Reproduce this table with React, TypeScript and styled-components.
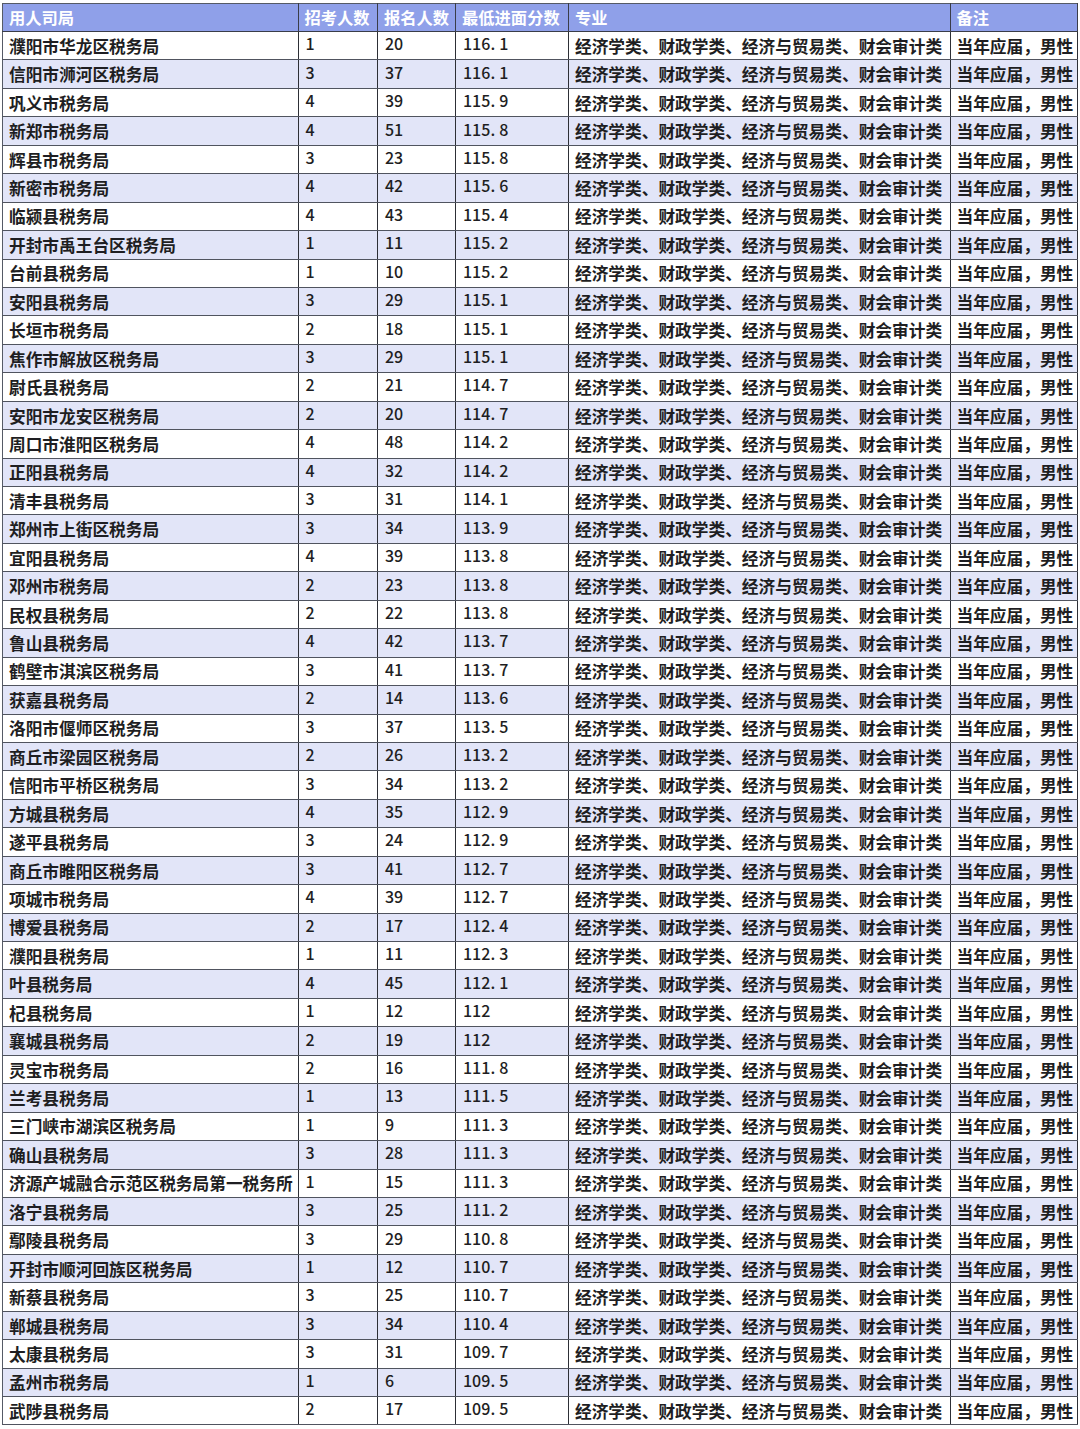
import React from "react";
import styled, { createGlobalStyle } from "styled-components";

const GlobalStyle = createGlobalStyle`
  html, body { margin: 0; padding: 0; background: #ffffff; }
  body { font-family: "Noto Sans CJK SC", "Noto Sans", sans-serif; }
`;

const Page = styled.div`
  width: 1080px;
  height: 1429px;
  padding: 3px 3px 0 2px;
  box-sizing: border-box;
  background: #ffffff;
`;

const Table = styled.table`
  width: 1075px;
  border-collapse: collapse;
  table-layout: fixed;
  border: 1.5px solid #555a66;
`;

const HeadCell = styled.th`
  height: 28px;
  padding: 0 0 0 6px;
  background: #8fa0e9;
  color: #ffffff;
  font-family: "Noto Sans CJK SC", sans-serif;
  font-weight: 700;
  font-size: 16.3px;
  text-align: left;
  white-space: nowrap;
  overflow: hidden;
  border-right: 1.5px solid #3a3d48;
  border-bottom: 1.5px solid #3a3d48;
  box-sizing: border-box;
  line-height: 1;
`;

const Row = styled.tr<{ $striped: boolean }>`
  height: 28.44px;
  background: ${(p) => (p.$striped ? "#e2e5f8" : "#ffffff")};
`;

const Cell = styled.td<{ $num?: boolean }>`
  padding: 0 0 0 ${(p) => (p.$num ? 7 : 6)}px;
  color: #1e1e22;
  font-family: "Noto Sans CJK SC", sans-serif;
  font-weight: ${(p) => (p.$num ? 500 : 700)};
  font-size: ${(p) => (p.$num ? "16px" : "16.7px")};
  line-height: 1;
  white-space: nowrap;
  overflow: hidden;
  vertical-align: middle;
  border-right: 1.5px solid #2d2f36;
  border-bottom: 1.5px solid #50545f;
  box-sizing: border-box;
  ${(p) => (p.$num ? "padding-bottom: 5px;" : "padding-top: 1px;")}
`;

const Dot = styled.span`
  display: inline-block;
  width: 0.55em;
`;

const columns = ["用人司局", "招考人数", "报名人数", "最低进面分数", "专业", "备注"];
const widths = [295.5, 79.5, 78, 113, 381.5, 127.5];

const data: [string, number, number, string][] = [
  ["濮阳市华龙区税务局", 1, 20, "116.1"],
  ["信阳市浉河区税务局", 3, 37, "116.1"],
  ["巩义市税务局", 4, 39, "115.9"],
  ["新郑市税务局", 4, 51, "115.8"],
  ["辉县市税务局", 3, 23, "115.8"],
  ["新密市税务局", 4, 42, "115.6"],
  ["临颍县税务局", 4, 43, "115.4"],
  ["开封市禹王台区税务局", 1, 11, "115.2"],
  ["台前县税务局", 1, 10, "115.2"],
  ["安阳县税务局", 3, 29, "115.1"],
  ["长垣市税务局", 2, 18, "115.1"],
  ["焦作市解放区税务局", 3, 29, "115.1"],
  ["尉氏县税务局", 2, 21, "114.7"],
  ["安阳市龙安区税务局", 2, 20, "114.7"],
  ["周口市淮阳区税务局", 4, 48, "114.2"],
  ["正阳县税务局", 4, 32, "114.2"],
  ["清丰县税务局", 3, 31, "114.1"],
  ["郑州市上街区税务局", 3, 34, "113.9"],
  ["宜阳县税务局", 4, 39, "113.8"],
  ["邓州市税务局", 2, 23, "113.8"],
  ["民权县税务局", 2, 22, "113.8"],
  ["鲁山县税务局", 4, 42, "113.7"],
  ["鹤壁市淇滨区税务局", 3, 41, "113.7"],
  ["获嘉县税务局", 2, 14, "113.6"],
  ["洛阳市偃师区税务局", 3, 37, "113.5"],
  ["商丘市梁园区税务局", 2, 26, "113.2"],
  ["信阳市平桥区税务局", 3, 34, "113.2"],
  ["方城县税务局", 4, 35, "112.9"],
  ["遂平县税务局", 3, 24, "112.9"],
  ["商丘市睢阳区税务局", 3, 41, "112.7"],
  ["项城市税务局", 4, 39, "112.7"],
  ["博爱县税务局", 2, 17, "112.4"],
  ["濮阳县税务局", 1, 11, "112.3"],
  ["叶县税务局", 4, 45, "112.1"],
  ["杞县税务局", 1, 12, "112"],
  ["襄城县税务局", 2, 19, "112"],
  ["灵宝市税务局", 2, 16, "111.8"],
  ["兰考县税务局", 1, 13, "111.5"],
  ["三门峡市湖滨区税务局", 1, 9, "111.3"],
  ["确山县税务局", 3, 28, "111.3"],
  ["济源产城融合示范区税务局第一税务所", 1, 15, "111.3"],
  ["洛宁县税务局", 3, 25, "111.2"],
  ["鄢陵县税务局", 3, 29, "110.8"],
  ["开封市顺河回族区税务局", 1, 12, "110.7"],
  ["新蔡县税务局", 3, 25, "110.7"],
  ["郸城县税务局", 3, 34, "110.4"],
  ["太康县税务局", 3, 31, "109.7"],
  ["孟州市税务局", 1, 6, "109.5"],
  ["武陟县税务局", 2, 17, "109.5"],
];

const MAJOR = "经济学类、财政学类、经济与贸易类、财会审计类";
const NOTE = "当年应届，男性";

function Score({ value }: { value: string }) {
  const [whole, frac] = value.split(".");
  if (frac === undefined) return <>{whole}</>;
  return (
    <>
      {whole}
      <Dot>.</Dot>
      {frac}
    </>
  );
}

export default function App() {
  return (
    <Page>
      <GlobalStyle />
      <Table>
        <colgroup>
          {widths.map((w, i) => (
            <col key={i} style={{ width: w }} />
          ))}
        </colgroup>
        <thead>
          <tr>
            {columns.map((c) => (
              <HeadCell key={c}>{c}</HeadCell>
            ))}
          </tr>
        </thead>
        <tbody>
          {data.map(([name, quota, applicants, score], i) => (
            <Row key={name} $striped={i % 2 === 1}>
              <Cell>{name}</Cell>
              <Cell $num>{quota}</Cell>
              <Cell $num>{applicants}</Cell>
              <Cell $num>
                <Score value={score} />
              </Cell>
              <Cell>{MAJOR}</Cell>
              <Cell>{NOTE}</Cell>
            </Row>
          ))}
        </tbody>
      </Table>
    </Page>
  );
}
